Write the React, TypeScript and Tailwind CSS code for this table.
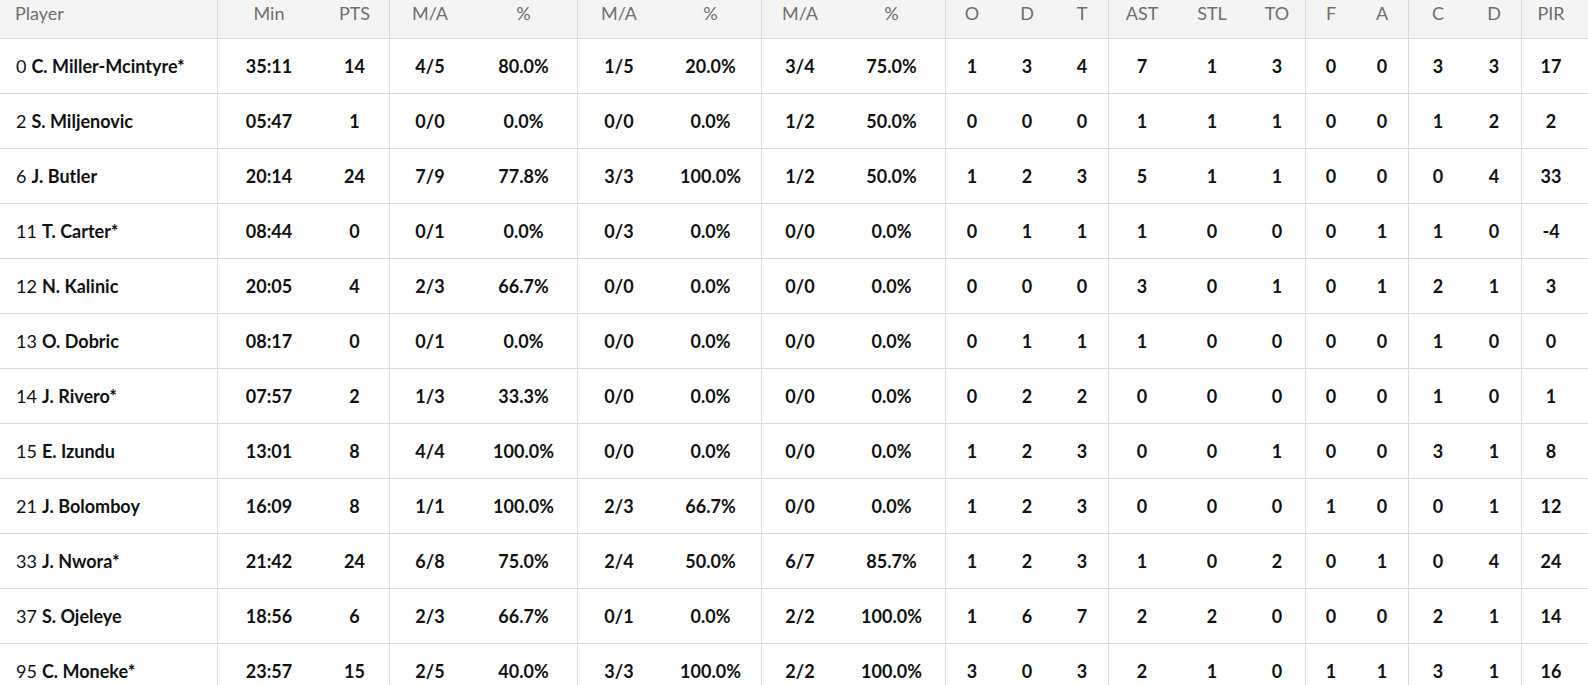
const cols = [
  { key: "min", label: "Min", w: "w-[102px]" },
  { key: "pts", label: "PTS", w: "w-[70px] border-r" },
  { key: "fg2", label: "M/A", w: "w-[80px]" },
  { key: "fg2p", label: "%", w: "w-[108px] border-r" },
  { key: "fg3", label: "M/A", w: "w-[82px]" },
  { key: "fg3p", label: "%", w: "w-[102px] border-r" },
  { key: "ft", label: "M/A", w: "w-[76px]" },
  { key: "ftp", label: "%", w: "w-[108px] border-r" },
  { key: "o", label: "O", w: "w-[52px]" },
  { key: "d", label: "D", w: "w-[58px]" },
  { key: "t", label: "T", w: "w-[53px] border-r" },
  { key: "ast", label: "AST", w: "w-[66px]" },
  { key: "stl", label: "STL", w: "w-[74px]" },
  { key: "to", label: "TO", w: "w-[57px] border-r" },
  { key: "f", label: "F", w: "w-[50px]" },
  { key: "a", label: "A", w: "w-[53px] border-r" },
  { key: "c", label: "C", w: "w-[58px]" },
  { key: "dr", label: "D", w: "w-[55px] border-r" },
  { key: "pir", label: "PIR", w: "flex-1 pr-[8px]" },
];

const rows: [string, string, string[]][] = [
  ["0", "C. Miller-Mcintyre*", ["35:11", "14", "4/5", "80.0%", "1/5", "20.0%", "3/4", "75.0%", "1", "3", "4", "7", "1", "3", "0", "0", "3", "3", "17"]],
  ["2", "S. Miljenovic", ["05:47", "1", "0/0", "0.0%", "0/0", "0.0%", "1/2", "50.0%", "0", "0", "0", "1", "1", "1", "0", "0", "1", "2", "2"]],
  ["6", "J. Butler", ["20:14", "24", "7/9", "77.8%", "3/3", "100.0%", "1/2", "50.0%", "1", "2", "3", "5", "1", "1", "0", "0", "0", "4", "33"]],
  ["11", "T. Carter*", ["08:44", "0", "0/1", "0.0%", "0/3", "0.0%", "0/0", "0.0%", "0", "1", "1", "1", "0", "0", "0", "1", "1", "0", "-4"]],
  ["12", "N. Kalinic", ["20:05", "4", "2/3", "66.7%", "0/0", "0.0%", "0/0", "0.0%", "0", "0", "0", "3", "0", "1", "0", "1", "2", "1", "3"]],
  ["13", "O. Dobric", ["08:17", "0", "0/1", "0.0%", "0/0", "0.0%", "0/0", "0.0%", "0", "1", "1", "1", "0", "0", "0", "0", "1", "0", "0"]],
  ["14", "J. Rivero*", ["07:57", "2", "1/3", "33.3%", "0/0", "0.0%", "0/0", "0.0%", "0", "2", "2", "0", "0", "0", "0", "0", "1", "0", "1"]],
  ["15", "E. Izundu", ["13:01", "8", "4/4", "100.0%", "0/0", "0.0%", "0/0", "0.0%", "1", "2", "3", "0", "0", "1", "0", "0", "3", "1", "8"]],
  ["21", "J. Bolomboy", ["16:09", "8", "1/1", "100.0%", "2/3", "66.7%", "0/0", "0.0%", "1", "2", "3", "0", "0", "0", "1", "0", "0", "1", "12"]],
  ["33", "J. Nwora*", ["21:42", "24", "6/8", "75.0%", "2/4", "50.0%", "6/7", "85.7%", "1", "2", "3", "1", "0", "2", "0", "1", "0", "4", "24"]],
  ["37", "S. Ojeleye", ["18:56", "6", "2/3", "66.7%", "0/1", "0.0%", "2/2", "100.0%", "1", "6", "7", "2", "2", "0", "0", "0", "2", "1", "14"]],
  ["95", "C. Moneke*", ["23:57", "15", "2/5", "40.0%", "3/3", "100.0%", "2/2", "100.0%", "3", "0", "3", "2", "1", "0", "1", "1", "3", "1", "16"]],
];

export default function App() {
  return (
    <div className="w-[1588px] h-[685px] overflow-hidden bg-white text-[18px] text-[#111]" style={{ fontFamily: "Lato, 'Open Sans', sans-serif" }}>
      <div className="flex h-[39px] bg-[#f4f4f4] border-b border-[#d9d9d9] text-[#6e6e6e]">
        <div className="w-[218px] border-r border-[#d9d9d9] pl-[15px]">Player</div>
        {cols.map((c) => (
          <div key={c.key} className={`${c.w} border-[#d9d9d9] text-center`}>
            {c.label}
          </div>
        ))}
      </div>
      {rows.map(([num, name, vals]) => (
        <div key={num} className="flex h-[55px] border-b border-[#d9d9d9] items-stretch">
          <div className="w-[218px] border-r border-[#d9d9d9] pl-[16px] flex items-center">
            <span>{num}</span>
            <span className="font-bold ml-[5px]">{name}</span>
          </div>
          {cols.map((c, i) => (
            <div key={c.key} className={`${c.w} border-[#d9d9d9] flex items-center justify-center font-bold`}>
              {vals[i]}
            </div>
          ))}
        </div>
      ))}
    </div>
  );
}
